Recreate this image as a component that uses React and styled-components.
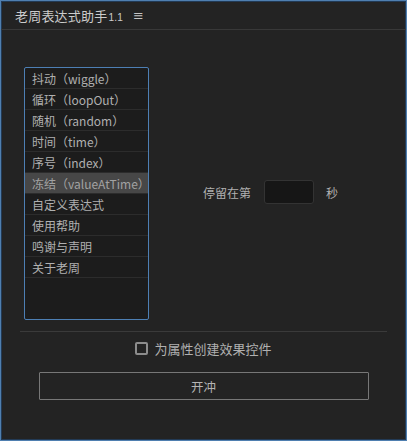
import React, { useState } from 'react'
import styled, { createGlobalStyle } from 'styled-components'

const GlobalStyle = createGlobalStyle`
  html, body {
    margin: 0;
    padding: 0;
    background: #232323;
  }
  * {
    box-sizing: border-box;
  }
`

const items = [
  '抖动（wiggle）',
  '循环（loopOut）',
  '随机（random）',
  '时间（time）',
  '序号（index）',
  '冻结（valueAtTime）',
  '自定义表达式',
  '使用帮助',
  '鸣谢与声明',
  '关于老周',
]

const App = () => {
  const [selected, setSelected] = useState(5)
  const [checked, setChecked] = useState(false)

  return (
    <>
      <GlobalStyle />
      <Window>
        <TitleBar>
          <Title>老周表达式助手<Version>1.1</Version></Title>
          <Menu>≡</Menu>
        </TitleBar>

        <Body>
          <Main>
            <List>
              {items.map((item, i) => (
                <Row key={item} active={i === selected} onClick={() => setSelected(i)}>
                  {item}
                </Row>
              ))}
            </List>

            <Settings>
              <Label>停留在第</Label>
              <FrameInput type="text" />
              <Label>秒</Label>
            </Settings>
          </Main>

          <Divider />

          <CheckRow onClick={() => setChecked(!checked)}>
            <Box checked={checked} />
            <Label size={13}>为属性创建效果控件</Label>
          </CheckRow>

          <Button>开冲</Button>
        </Body>
      </Window>
    </>
  )
}

export default App

const Window = styled.div`
  width: 407px;
  height: 441px;
  background: #232323;
  border: 1px solid #4f7fb0;
  box-shadow: inset 0 0 0 1px #223a55;
  display: flex;
  flex-direction: column;
  font-family: "Noto Sans CJK SC", "Noto Sans", sans-serif;
  color: #b4b4b4;
  overflow: hidden;
`

const TitleBar = styled.div`
  height: 29px;
  flex-shrink: 0;
  display: flex;
  align-items: center;
  padding: 0 0 0 14px;
  border-bottom: 1px solid #383838;
`

const Title = styled.span`
  font-size: 13px;
  color: #cccccc;
  letter-spacing: 0.2px;
`

const Version = styled.span`
  font-family: "Liberation Sans", sans-serif;
  font-size: 10px;
  margin-left: 1px;
`

const Menu = styled.span`
  margin-left: 10px;
  font-family: "DejaVu Sans", sans-serif;
  font-size: 13px;
  color: #c4c4c4;
`

const Body = styled.div`
  display: flex;
  flex-direction: column;
  align-items: center;
  padding-top: 37px;
`

const Main = styled.div`
  align-self: stretch;
  display: flex;
  align-items: center;
  padding-left: 23px;
`

const List = styled.div`
  width: 125px;
  height: 253px;
  background: #1c1c1c;
  border: 1px solid #4d7fb4;
  border-radius: 2px;
  display: flex;
  flex-direction: column;
`

const Row = styled.div`
  height: 21px;
  flex-shrink: 0;
  display: flex;
  align-items: center;
  padding-left: 7px;
  font-size: 12px;
  white-space: nowrap;
  color: ${props => props.active ? '#a2a2a2' : '#b0b0b0'};
  background: ${props => props.active ? '#474747' : 'transparent'};
  border-bottom: 1px solid #2c2c2c;
  cursor: default;
`

const Settings = styled.div`
  display: flex;
  align-items: center;
  margin-left: 54px;
  margin-top: -3px;
`

const Label = styled.span`
  font-size: ${props => props.size || 12}px;
  color: #b0b0b0;
`

const FrameInput = styled.input`
  width: 50px;
  height: 24px;
  margin: 0 12px 0 13px;
  background: #161616;
  border: 1px solid #333333;
  border-radius: 3px;
  outline: none;
  color: #d0d0d0;
`

const Divider = styled.div`
  width: 367px;
  height: 1px;
  margin-top: 11px;
  background: #3a3a3a;
`

const CheckRow = styled.div`
  display: flex;
  align-items: center;
  gap: 6px;
  margin-top: 8px;
  height: 16px;
  cursor: default;
`

const Box = styled.span`
  width: 13px;
  height: 13px;
  border: 2px solid #8c8c8c;
  border-radius: 2px;
  background: ${props => props.checked ? '#8c8c8c' : 'transparent'};
`

const Button = styled.button`
  width: 330px;
  height: 28px;
  margin-top: 16px;
  background: #232323;
  border: 1px solid #777777;
  border-radius: 1px;
  font-family: "Noto Sans CJK SC", sans-serif;
  font-size: 12.5px;
  color: #b4b4b4;
  cursor: pointer;
`
